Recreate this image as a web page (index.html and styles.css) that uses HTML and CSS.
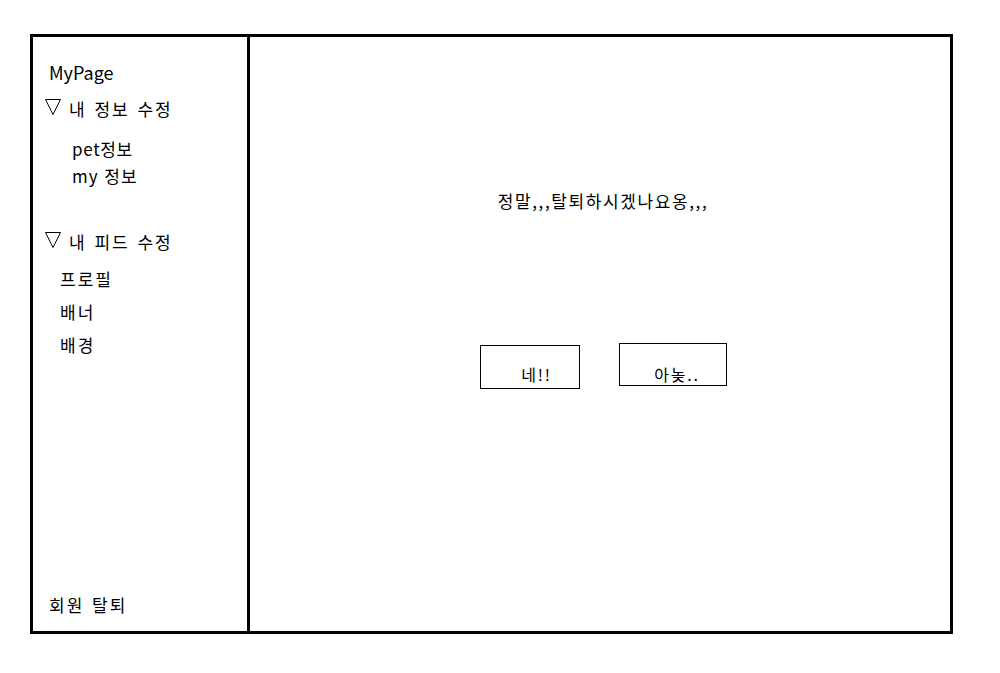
FILE: index.html
```html
<!DOCTYPE html>
<html lang="ko">
<head>
<meta charset="utf-8">
<title>MyPage</title>
<link rel="stylesheet" href="styles.css">
</head>
<body>
<div class="frame">
  <aside class="sidebar">
    <div class="title">MyPage</div>
    <div class="group-head g1">
      <svg class="tri" width="16" height="16" viewBox="0 0 16 16"><polygon points="0.5,0.5 15.5,0.5 8,15.5" fill="none" stroke="#000" stroke-width="1"/></svg>
      <span>내 정보 수정</span>
    </div>
    <div class="sub pet">pet정보</div>
    <div class="sub my">my 정보</div>
    <div class="group-head g2">
      <svg class="tri" width="16" height="16" viewBox="0 0 16 16"><polygon points="0.5,0.5 15.5,0.5 8,15.5" fill="none" stroke="#000" stroke-width="1"/></svg>
      <span>내 피드 수정</span>
    </div>
    <div class="feed f1">프로필</div>
    <div class="feed f2">배너</div>
    <div class="feed f3">배경</div>
    <div class="leave">회원 탈퇴</div>
  </aside>
  <main class="content">
    <p class="question">정말,,,탈퇴하시겠나요옹,,,</p>
    <div class="actions">
      <button class="btn yes">네!!</button>
      <button class="btn no">아놎..</button>
    </div>
  </main>
</div>
</body>
</html>
```
FILE: styles.css
```css
* { box-sizing: border-box; }
html, body { margin: 0; padding: 0; background: #fff; }
body {
  font-family: "Noto Sans CJK KR", "Noto Sans", sans-serif;
  color: #000;
  width: 1000px;
  height: 673px;
}
.frame {
  margin: 34px 0 0 30px;
  width: 923px;
  height: 600px;
  border: 3px solid #000;
  display: flex;
}
.sidebar {
  width: 217px;
  border-right: 3px solid #000;
  display: flex;
  flex-direction: column;
  padding: 23px 0 14px 0;
  font-size: 17px;
  line-height: 24px;
}
.title { padding-left: 16px; font-size: 18px; }
.group-head {
  display: flex;
  align-items: center;
  padding-left: 12px;
  letter-spacing: 2px;
  word-spacing: 1px;
}
.group-head .tri { margin-right: 8px; margin-top: -4px; }
.g1 { margin-top: 13px; }
.g2 { margin-top: 42px; }
.sub { padding-left: 39px; }
.pet { margin-top: 16px; letter-spacing: 0.7px; }
.my { margin-top: 3px; letter-spacing: 1px; }
.feed { padding-left: 27px; letter-spacing: 2px; }
.f1 { margin-top: 13px; }
.f2 { margin-top: 9px; }
.f3 { margin-top: 9px; }
.leave { margin-top: auto; padding-left: 16px; letter-spacing: 2px; word-spacing: 1px; }
.content {
  flex: 1;
  display: flex;
  flex-direction: column;
  align-items: center;
  padding-top: 152px;
}
.question {
  margin: 0;
  font-size: 17px;
  line-height: 24px;
  letter-spacing: 1.6px;
  padding-left: 6px;
}
.actions {
  margin-top: 130px;
  display: flex;
  align-items: flex-start;
  gap: 39px;
  padding-left: 7px;
}
.btn {
  font-family: inherit;
  font-size: 16px;
  background: #fff;
  border: 1px solid #000;
  border-radius: 0;
  color: #000;
  padding: 0;
  line-height: 20px;
  letter-spacing: 1.8px;
}
.yes { width: 100px; height: 44px; margin-top: 2px; padding-top: 14px; padding-left: 13px; }
.no { width: 108px; height: 43px; padding-top: 18px; padding-left: 8px; }
```
